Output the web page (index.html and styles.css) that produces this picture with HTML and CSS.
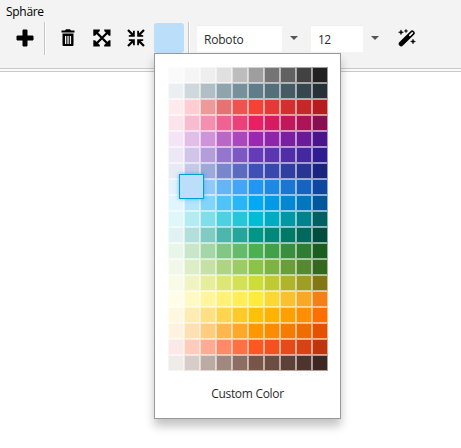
FILE: index.html
```
<!DOCTYPE html>
<html lang="de">
<head>
<meta charset="utf-8">
<title>Sphäre</title>
<link rel="stylesheet" href="styles.css">
</head>
<body>
<header class="ribbon">
  <div class="title"><span>Sphäre</span></div>
  <div class="toolbar">
    <button class="tool add" aria-label="Add"><svg width="18" height="18" viewBox="0 0 18 18"><path d="M7 1h4v6h6v4h-6v6H7v-6H1V7h6z" stroke="#000" stroke-linejoin="round"/></svg></button>
    <i class="separator"></i>
    <button class="tool trash" aria-label="Delete"><svg width="14" height="18" viewBox="0 0 14 18"><path fill-rule="evenodd" d="M.5 1.500H4l1-1.300h4l1 1.300h3.500v2H.5zM1.500 4.500h11v11.500q0 1-1 1h-9q-1 0-1-1zM4 7v8h1.300V7zm2.400 0v8h1.300V7zm2.400 0v8h1.300V7z"/></svg></button>
    <button class="tool expand" aria-label="Expand"><svg width="18" height="18" viewBox="0 0 18 18"><path d="M3 3l12 12M15 3L3 15" stroke="#000" stroke-width="2.300"/><path d="M.3.5h6.500v1.500L2 6.800H.3zM17.500.5v6.300H16L11.200 2V.5zM.3 17.500v-6.300H2l4.800 4.800v1.500zM17.500 17.500h-6.300V16l4.800-4.800h1.500z"/></svg></button>
    <button class="tool compress" aria-label="Compress"><svg width="18" height="18" viewBox="0 0 18 18"><path d="M1 1l5 5M17 1l-5 5M1 17l5-5M17 17l-5-5" stroke="#000" stroke-width="2.200"/><path d="M7.800 1.800v6H1.800V6.200l3-.6.8-.8.6-3zM10.200 1.800v6h6V6.200l-3-.6-.8-.8-.6-3zM7.800 16.200v-6h-6v1.600l3 .6.8.8.6 3zM10.200 16.200v-6h6v1.600l-3 .6-.8.8-.6 3z"/></svg></button>
    <div class="picker">
      <button class="swatch" aria-label="Color"></button>
      <div class="popup">
        <div class="palette" id="palette"></div>
        <div class="custom"><span>Custom Color</span></div>
      </div>
    </div>
    <i class="separator second"></i>
    <div class="field font"><span>Roboto</span></div>
    <i class="arrow"></i>
    <div class="field size"><span>12</span></div>
    <i class="arrow"></i>
    <button class="tool wand" aria-label="Magic"><svg width="18" height="18" viewBox="0 0 18 18"><path d="M3.200 14.800L14.200 4" stroke="#000" stroke-width="5" stroke-linecap="round"/><path d="M11.800 6.300L14.300 3.800" stroke="#f3f3f3" stroke-width="1.700" stroke-linecap="round"/><path d="M3 .8l.7 1.800 1.800.7-1.800.7L3 5.800 2.300 4 .5 3.300l1.800-.7zM8 .2l.5 1.300 1.300.5-1.300.5L8 3.800l-.5-1.300L6.200 2l1.300-.5zM15 10l.7 1.800 1.800.7-1.800.7-.7 1.800-.7-1.800-1.800-.7 1.800-.7z" stroke="#000" stroke-width=".4"/></svg></button>
  </div>
</header>
<script src="palette.js"></script>
</body>
</html>
```
FILE: palette.js
```
const rows = [
  "fafafa f5f5f5 eeeeee e0e0e0 bdbdbd 9e9e9e 757575 616161 424242 212121",
  "eceff1 cfd8dc b0bec5 90a4ae 78909c 607d8b 546e7a 455a64 37474f 263238",
  "ffebee ffcdd2 ef9a9a e57373 ef5350 f44336 e53935 d32f2f c62828 b71c1c",
  "fce4ec f8bbd0 f48fb1 f06292 ec407a e91e63 d81b60 c2185b ad1457 880e4f",
  "f3e5f5 e1bee7 ce93d8 ba68c8 ab47bc 9c27b0 8e24aa 7b1fa2 6a1b9a 4a148c",
  "ede7f6 d1c4e9 b39ddb 9575cd 7e57c2 673ab7 5e35b1 512da8 4527a0 311b92",
  "e8eaf6 c5cae9 9fa8da 7986cb 5c6bc0 3f51b5 3949ab 303f9f 283593 1a237e",
  "e3f2fd bbdefb 90caf9 64b5f6 42a5f5 2196f3 1e88e5 1976d2 1565c0 0d47a1",
  "e1f5fe b3e5fc 81d4fa 4fc3f7 29b6f6 03a9f4 039be5 0288d1 0277bd 01579b",
  "e0f7fa b2ebf2 80deea 4dd0e1 26c6da 00bcd4 00acc1 0097a7 00838f 006064",
  "e0f2f1 b2dfdb 80cbc4 4db6ac 26a69a 009688 00897b 00796b 00695c 004d40",
  "e8f5e9 c8e6c9 a5d6a7 81c784 66bb6a 4caf50 43a047 388e3c 2e7d32 1b5e20",
  "f1f8e9 dcedc8 c5e1a5 aed581 9ccc65 8bc34a 7cb342 689f38 558b2f 33691e",
  "f9fbe7 f0f4c3 e6ee9c dce775 d4e157 cddc39 c0ca33 afb42b 9e9d24 827717",
  "fffde7 fff9c4 fff59d fff176 ffee58 ffeb3b fdd835 fbc02d f9a825 f57f17",
  "fff8e1 ffecb3 ffe082 ffd54f ffca28 ffc107 ffb300 ffa000 ff8f00 ff6f00",
  "fff3e0 ffe0b2 ffcc80 ffb74d ffa726 ff9800 fb8c00 f57c00 ef6c00 e65100",
  "fbe9e7 ffccbc ffab91 ff8a65 ff7043 ff5722 f4511e e64a19 d84315 bf360c",
  "efebe9 d7ccc8 bcaaa4 a1887f 8d6e63 795548 6d4c41 5d4037 4e342e 3e2723"
];
const palette = document.getElementById("palette");
rows.forEach((row) => row.split(" ").forEach((color) => {
  const cell = document.createElement("i");
  cell.className = "cell";
  cell.style.backgroundColor = "#" + color;
  if (color === "bbdefb") {
    const marker = document.createElement("b");
    marker.className = "selected";
    cell.append(marker);
  }
  palette.append(cell);
}));
```
FILE: styles.css
```
* { box-sizing: border-box; }
body {
  margin: 0;
  height: 448px;
  overflow: hidden;
  background: #fff;
  color: #2b2b2b;
  font: 12px/16px "Open Sans", "Noto Sans", sans-serif;
}
.ribbon {
  height: 72px;
  background: #f3f3f3;
  border-bottom: 1px solid #c8c8c8;
  box-shadow: inset 0 -2px #fafafa, inset 0 -3px #c8c8c8;
}
.title { height: 22px; padding: 4px 0 0 6px; color: #000; letter-spacing: -.3px; }
.toolbar { display: flex; align-items: flex-start; height: 33px; }
.tool { display: block; border: 0; padding: 0; background: none; margin-top: 7px; }
.tool svg { display: block; }
.add { margin-left: 16px; }
.separator { width: 2px; height: 33px; margin-left: 10px; background: linear-gradient(to right, #c4c4c4 50%, #fff 50%); }
.trash { margin-left: 15px; }
.expand { margin-left: 18px; }
.compress { margin-left: 16px; }
.picker { position: relative; width: 30px; margin-left: 9px; }
.swatch { display: block; width: 30px; height: 30px; margin-top: 1px; padding: 0; border: 0; border-radius: 3px; background: #bbdefb; }
.popup {
  position: absolute;
  left: 0;
  top: 31px;
  width: 187px;
  height: 366px;
  padding: 13px;
  background: #fff;
  border: 1px solid #999;
  box-shadow: 0 7px 9px rgba(0, 0, 0, .24);
}
.palette { display: grid; grid-template-columns: repeat(10, 16px); grid-auto-rows: 16px; }
.cell { position: relative; border: 1px solid rgba(255, 255, 255, .55); }
.selected {
  position: absolute;
  z-index: 1;
  left: -6px;
  top: -6px;
  width: 25px;
  height: 25px;
  background: #bbdefb;
  border: 1px solid #039ed3;
  box-shadow: 0 0 4px rgba(3, 158, 211, .6);
}
.custom { padding-top: 15px; text-align: center; white-space: nowrap; letter-spacing: -.3px; }
.second { margin-left: 4px; }
.field { height: 27px; margin-top: 3px; padding: 6px 0 0 7px; background: #fff; border-top: 1px solid #ededed; }
.font { width: 85px; margin-left: 7px; }
.font span { letter-spacing: -.2px; }
.size { width: 52px; margin-left: 13px; }
.size span { letter-spacing: -.6px; }
.arrow { width: 8px; margin: 14px 0 0 8px; border: 4px solid transparent; border-top-color: #555; border-bottom: 0; }
.wand { margin-left: 19px; }
```
